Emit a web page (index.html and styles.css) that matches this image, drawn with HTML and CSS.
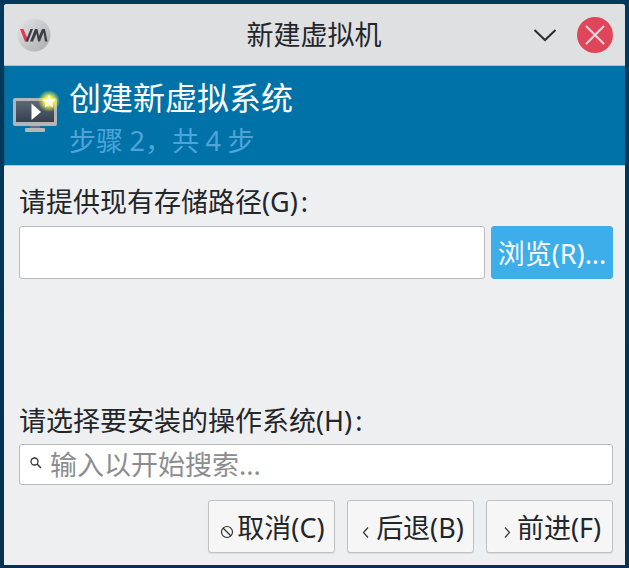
FILE: index.html
```html
<!DOCTYPE html>
<html lang="zh">
<head>
<meta charset="utf-8">
<title>新建虚拟机</title>
<link rel="stylesheet" href="styles.css">
</head>
<body>
<div class="window">
  <header class="titlebar">
    <svg class="app-icon" width="34" height="34" viewBox="0 0 34 34">
      <defs>
        <linearGradient id="disc" x1="0" y1="0" x2="1" y2="1">
          <stop offset="0" stop-color="#e4e5e7"/><stop offset="1" stop-color="#a9abae"/>
        </linearGradient>
      </defs>
      <circle cx="17" cy="17" r="16.500" fill="url(#disc)"/>
      <path d="M3 11h3.500l3.500 8.500 1.500 4H8z" fill="#e2394f"/>
      <path d="M8.500 23.500 13.500 11H16l-5 12.500zM13 23.500 18 11h2.500l1.500 7 3-7H28l2.500 12.500H28l-1.500-9-3.500 9h-2l-1.500-8-3.500 8z" fill="#3c3f44"/>
    </svg>
    <div class="title">新建虚拟机</div>
    <svg class="chevron" width="24" height="14" viewBox="0 0 24 14"><path d="M1.500 2 12 12 22.500 2" fill="none" stroke="#2b2d30" stroke-width="2"/></svg>
    <svg class="close" width="36" height="36" viewBox="0 0 36 36">
      <circle cx="18" cy="18" r="18" fill="#e0465a"/>
      <path d="M9 9l18 18M27 9L9 27" stroke="#f0d8dc" stroke-width="2"/>
    </svg>
  </header>
  <section class="banner">
    <svg class="banner-icon" width="48" height="46" viewBox="0 0 48 46">
      <defs>
        <radialGradient id="glow"><stop offset="0.4" stop-color="#f4f44a"/><stop offset="1" stop-color="#f4f44a" stop-opacity="0"/></radialGradient>
        <linearGradient id="scr" x1="0" y1="0" x2="0" y2="1"><stop offset="0" stop-color="#5d6876"/><stop offset="1" stop-color="#36404e"/></linearGradient>
      </defs>
      <rect x="0" y="11" width="44" height="28" rx="2" fill="#b3b5b8"/>
      <rect x="3" y="14" width="38" height="21" fill="url(#scr)"/>
      <path d="M18.500 16.500 28 25 18.500 33z" fill="#fff"/>
      <rect x="17" y="39" width="10" height="2" fill="#6b6e72"/>
      <rect x="12" y="41" width="20" height="4" rx="1" fill="#b5b7ba"/>
      <circle cx="36" cy="14" r="11" fill="url(#glow)"/>
      <path d="M36 7.500l2 4.500 4.800.5-3.600 3.200 1 4.800-4.200-2.500-4.200 2.500 1-4.800-3.600-3.200 4.800-.5z" fill="#fffde8"/>
    </svg>
    <div class="banner-text">
      <div class="banner-title">创建新虚拟系统</div>
      <div class="banner-sub">步骤 2，共 4 步</div>
    </div>
  </section>
  <main class="content">
    <label class="label">请提供现有存储路径(G)<span class="colon">:</span></label>
    <div class="path-row">
      <div class="field path-field"></div>
      <button class="browse">浏览(R)...</button>
    </div>
    <div class="spacer"></div>
    <label class="label">请选择要安装的操作系统(H)<span class="colon">:</span></label>
    <div class="field search">
      <svg class="search-icon" width="14" height="14" viewBox="0 0 14 14"><circle cx="5.500" cy="5.500" r="3.500" fill="none" stroke="#333" stroke-width="1.300"/><path d="M8 8l4 4" stroke="#333" stroke-width="1.500"/></svg>
      <span class="placeholder">输入以开始搜索...</span>
    </div>
    <div class="actions">
      <button class="btn">
        <svg class="btn-icon" width="14" height="14" viewBox="0 0 14 14"><circle cx="7" cy="7" r="5.500" fill="none" stroke="#333" stroke-width="1.200"/><path d="M3 3l8 8" stroke="#333" stroke-width="1.200"/></svg><span class="btn-text">取消(C)</span></button>
      <button class="btn">
        <svg class="btn-icon" width="14" height="14" viewBox="0 0 14 14"><path d="M9 2.500 4.500 7.500 9 12.500" fill="none" stroke="#333" stroke-width="1.200"/></svg><span class="btn-text">后退(B)</span></button>
      <button class="btn">
        <svg class="btn-icon" width="14" height="14" viewBox="0 0 14 14"><path d="M5 2.500 9.500 7.500 5 12.500" fill="none" stroke="#333" stroke-width="1.200"/></svg><span class="btn-text">前进(F)</span></button>
    </div>
  </main>
</div>
</body>
</html>
```

FILE: styles.css
```css
* { box-sizing: border-box; }
html, body { margin: 0; height: 100%; }
body {
  background: linear-gradient(180deg, #00395c 0%, #04314f 100%);
  padding: 4px 4px 3px 4px;
  font-family: "Noto Sans", "Noto Sans CJK SC", sans-serif;
  color: #232629;
  overflow: hidden;
}
.window {
  height: 561px;
  display: flex;
  flex-direction: column;
  background: #eeeff1;
  border-radius: 3px 3px 0 0;
  overflow: hidden;
}
.titlebar {
  height: 62px;
  flex: none;
  display: flex;
  align-items: center;
  background: #dfe0e2;
  border-bottom: 1px solid #bcbdbf;
  padding: 0 12px 0 13px;
}
.title {
  flex: 1;
  text-align: center;
  font-size: 27px;
  line-height: 38px;
  padding-right: 2px;
  color: #232629;
}
.chevron { margin-right: 20px; flex: none; }
.close { flex: none; }
.app-icon { flex: none; margin-right: 46px; }
.banner {
  height: 100px;
  flex: none;
  display: flex;
  align-items: flex-start;
  background: #0072a8;
  border-left: 1px solid #0a5f8c;
  padding: 0 0 0 8px;
  border-bottom: 1px solid #b9c6d0;
}
.banner-icon { margin-top: 21px; margin-right: 8px; flex: none; }
.banner-text { display: flex; flex-direction: column; padding-top: 8px; }
.banner-title { font-size: 32px; line-height: 48px; color: #fff; }
.banner-sub { font-size: 27px; line-height: 38px; color: #4ea4d9; word-spacing: -0.5px; }
.content {
  flex: 1;
  display: flex;
  flex-direction: column;
  padding: 18px 12px 12px 15px;
}
.label { font-size: 27px; line-height: 36px; display: block; }
.colon { padding-left: 3px; }
.path-row { display: flex; gap: 6px; margin-top: 6px; }
.field {
  background: #fff;
  border: 1px solid #b9babc;
  border-radius: 3px;
}
.path-field { flex: 1; height: 53px; }
.browse {
  width: 122px;
  height: 53px;
  background: #3daee9;
  border: 1px solid #3daee9;
  border-radius: 3px;
  color: #fcfcfc;
  font: inherit;
  font-size: 27px;
  padding: 0;
  white-space: nowrap;
}
.spacer { height: 124px; flex: none; }
.search {
  height: 41px;
  margin-top: 5px;
  display: flex;
  align-items: center;
  padding-left: 9px;
}
.search-icon { flex: none; margin-right: 7px; margin-top: -3px; }
.placeholder { font-size: 27px; line-height: 36px; color: #8b8d8f; padding-top: 1px; }
.actions {
  display: flex;
  justify-content: flex-end;
  gap: 12px;
  margin-top: 15px;
}
.btn {
  width: 127px;
  height: 53px;
  display: flex;
  align-items: center;
  justify-content: center;
  background: #f6f6f7;
  border: 1px solid #c0c1c3;
  border-radius: 3px;
  box-shadow: 0 1px 1px rgba(0,0,0,.08);
  font: inherit;
  font-size: 27px;
  color: #232629;
  padding: 0 0 0 2px;
  white-space: nowrap;
}
.btn-icon { flex: none; margin-top: 10px; margin-right: 3px; }
```
